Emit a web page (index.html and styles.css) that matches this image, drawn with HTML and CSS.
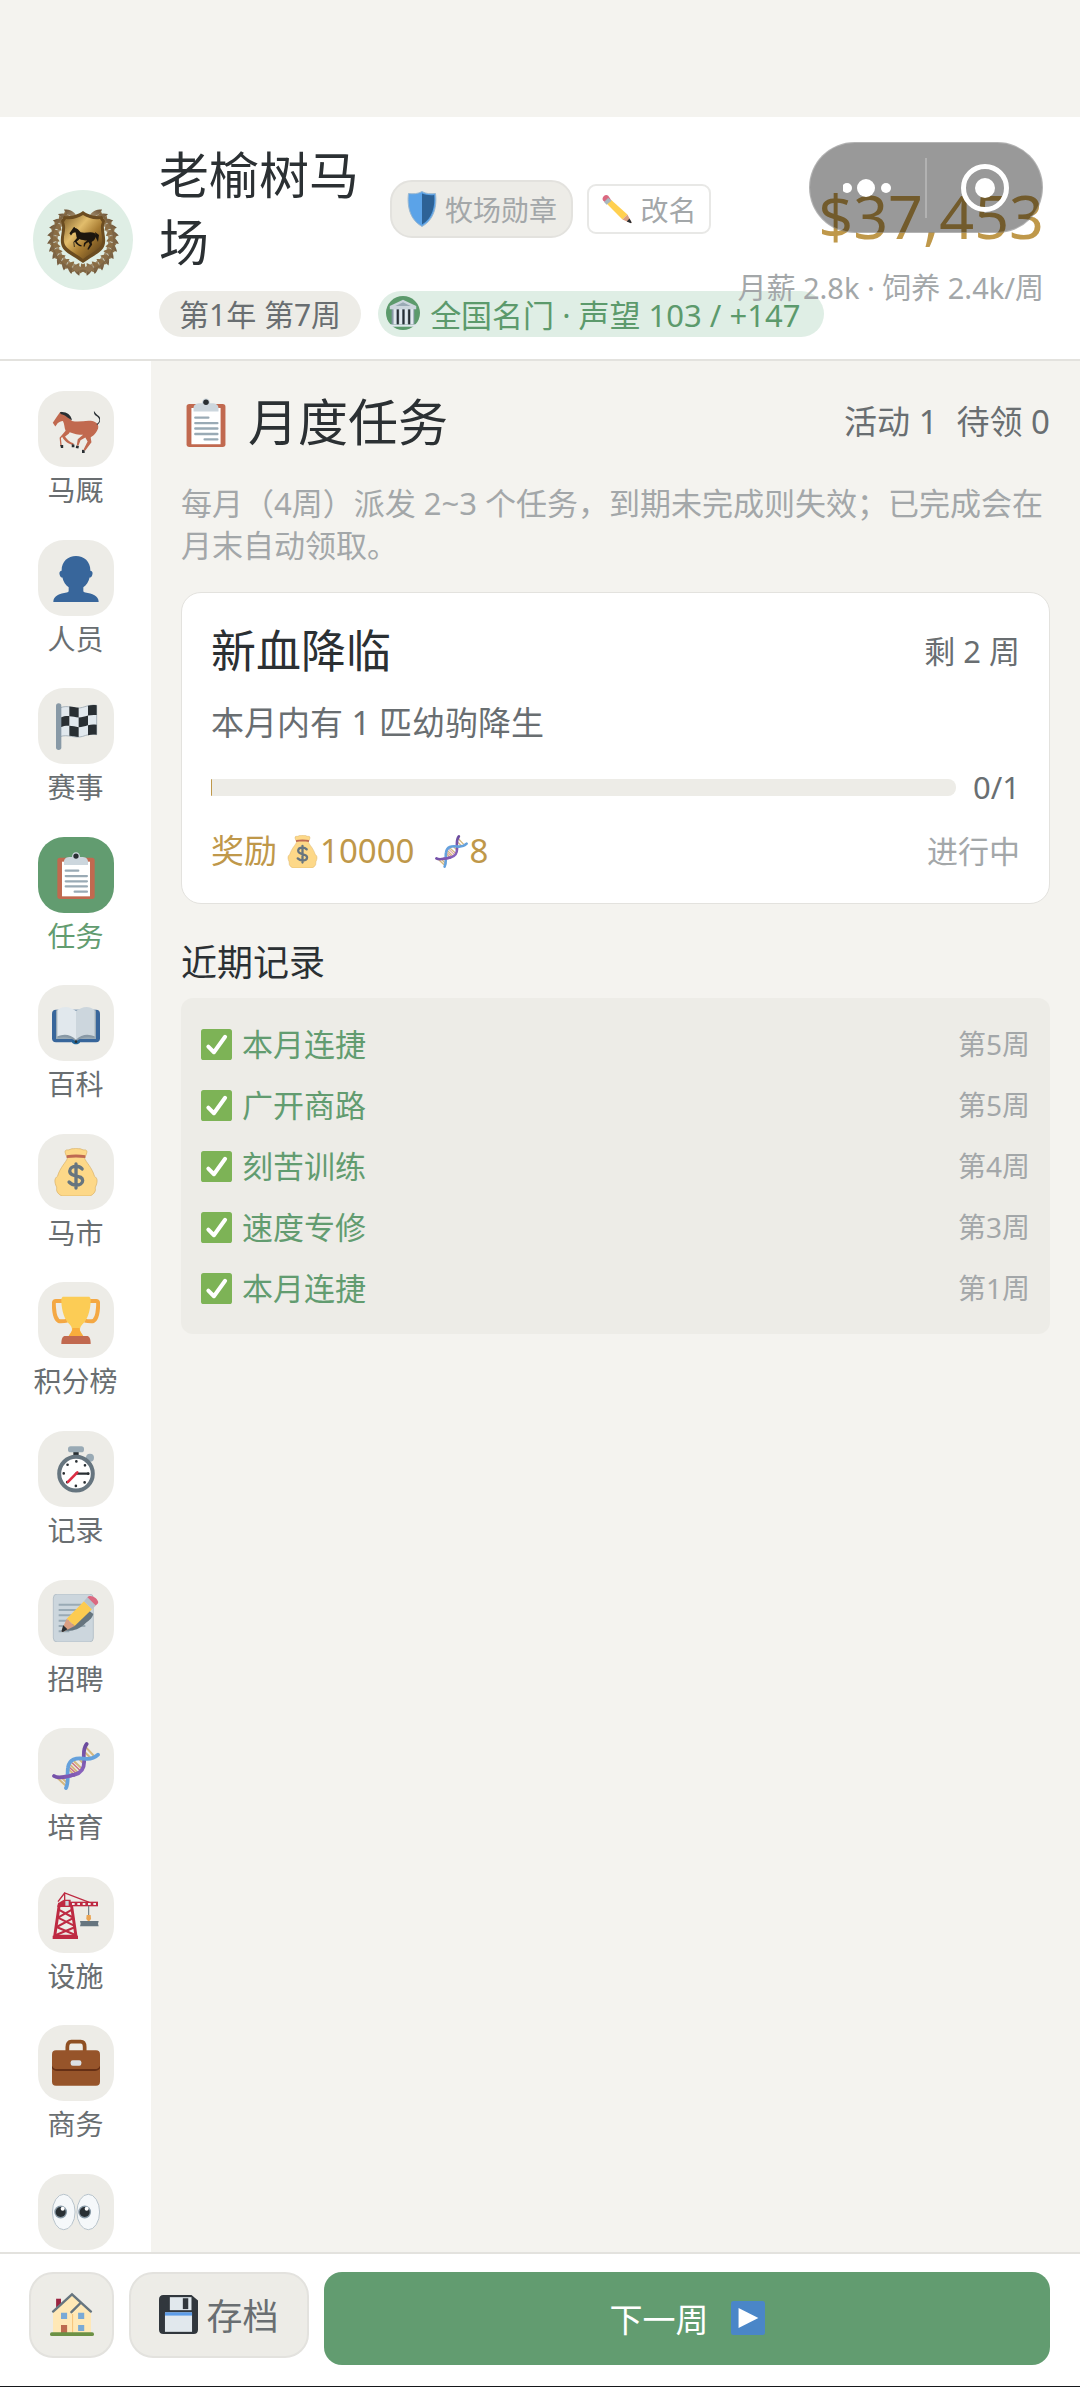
FILE: index.html
```html
<!DOCTYPE html>
<html lang="zh-CN">
<head>
<meta charset="utf-8">
<meta name="viewport" content="width=device-width, initial-scale=1">
<title>月度任务</title>
<link rel="stylesheet" href="styles.css">
</head>
<body>
<svg class="sprite" aria-hidden="true">
  <defs>
    <linearGradient id="gold" x1="0" y1="0" x2="1" y2="1">
      <stop offset="0" stop-color="#7d5d2a"/><stop offset=".35" stop-color="#e2bd6c"/><stop offset=".6" stop-color="#a87c32"/><stop offset="1" stop-color="#4d3415"/>
    </linearGradient>
    <linearGradient id="bronze" x1="0" y1="0" x2="0" y2="1">
      <stop offset="0" stop-color="#a48f6f"/><stop offset="1" stop-color="#6b5133"/>
    </linearGradient>
    <linearGradient id="strandA" x1="0" y1="1" x2="1" y2="0">
      <stop offset="0" stop-color="#7450a8"/><stop offset=".5" stop-color="#8a63bd"/><stop offset="1" stop-color="#6a4a9c"/>
    </linearGradient>
    <g id="leaf"><path d="M50 86c-5-3-8-7-7-12 4 1 8 5 7 12z"/><path d="M50 84c-1-4 0-8 4-11 2 4 1 8-4 11z" fill="#8a6d45"/></g>
    <g id="branch">
      <use href="#leaf" transform="rotate(6 50 50)"/><use href="#leaf" transform="rotate(19 50 50)"/><use href="#leaf" transform="rotate(32 50 50)"/><use href="#leaf" transform="rotate(45 50 50)"/><use href="#leaf" transform="rotate(58 50 50)"/><use href="#leaf" transform="rotate(71 50 50)"/><use href="#leaf" transform="rotate(84 50 50)"/><use href="#leaf" transform="rotate(97 50 50)"/><use href="#leaf" transform="rotate(110 50 50)"/><use href="#leaf" transform="rotate(123 50 50)"/><use href="#leaf" transform="rotate(136 50 50)"/><use href="#leaf" transform="rotate(148 50 50)"/>
    </g>
    <path id="horse-shape" d="M.6 13.3 4 8.2 6 5.4l1.200-.4.5 1.300c3 .5 5.300 3 7.300 5.700 4 .8 8 .2 12.500-.2 4 0 7 1.500 7.200 4.200.2 2-1 3.500-2 5-1.200 1.800-2.700 2.500-3.700 3.300l.6 3.700-4.600 6.200-1.500-.5 3.200-6.400-1.700-3-3.600 2.200-1.600 4-1.200-.3.700-4.600 4-3.200c-3.500-.2-7-.7-10-2-.8 1.700-2.700 2.200-3.500 3.300 1.700 2.300 3.500 4.500 6.400 4.900l-.3 1.400c-4-.6-6.800-3.200-8.300-6.100l-.9 1 .6 5.800H6.300l-.6-6.200 4.500-5.200c-1-2-.7-5-2-7.300-1.500.3-3 .7-4 1.700l-1.700 2.400z"/>

    <symbol id="i-horse" viewBox="0 0 36 36">
      <use href="#horse-shape" fill="#c1694f"/>
      <path d="M6 5.500c4-.9 8 1.500 9 5.700-3-1-5-4-8.500-4.500z" fill="#292f33"/>
      <path d="M33.500 14c2.500-1 3-4-.5-6-1.500-1-1.700-2.500-1.500-3.500 1.500 3 5 3.500 4.700 6.500-.1 2-1.200 3.500-2.500 4z" fill="#292f33"/>
      <path d="M6.200 30h2.200v2.200H6.700zM14.800 29.500l2 .2v2h-2zM18.200 30.300l2 .4-.4 2-2-.4zM22.500 33.500l2 .5v2h-2z" fill="#292f33"/>
    </symbol>
    <symbol id="i-person" viewBox="0 0 36 36">
      <path d="M18 1.500c6 0 10.800 4 10.800 11 1.700.2 1.900 1.600 1.400 3.200-.4 1.400-1.200 2-2 2-.7 3.300-2.400 5.700-4.700 7.300v2.500c0 .8.600 1.200 1.500 1.400C30 29.500 35 31.500 35 36H1c0-4.500 5-6.500 10-7.100.9-.2 1.500-.6 1.500-1.400V25c-2.300-1.600-4-4-4.700-7.300-.8 0-1.600-.6-2-2-.5-1.600-.3-3 1.400-3.200 0-7 4.800-11 10.800-11z" fill="#38669b"/>
    </symbol>
    <symbol id="i-flag" viewBox="0 0 36 36">
      <path d="M6 4.500C12 1.500 17 6 23 4c4-1.300 7-2 10.500-1.500v22c-4.500-.7-7.500.2-10.500 1.300-6 1.800-11-2-17 .2z" fill="#e1e8ed" stroke="#99a6b0" stroke-width=".6"/>
      <path d="M13 3.300c2.500.2 4.500.7 7 1v7.300c-2.500-.3-4.500-.8-7-1zM27 2.900c2-.6 4-.7 6.500-.4v7.300c-2.500-.3-4.500-.1-6.500.4zM6 11.800c2.500-1 4.500-1.300 7-1.200v7.300c-2.500-.1-4.500.2-7 1.200zM20 11.600c2.500 0 4.500-.7 7-1.400v7.300c-2.500.7-4.500 1.400-7 1.400zM13 17.900c2.500.2 4.500.7 7 1v7.400c-2.500-.3-4.500-1-7-1zM27 17.500c2-.6 4-.7 6.500-.4v7.400c-2.500-.3-4.500-.1-6.500.4z" fill="#292f33"/>
      <rect x="3" y="1" width="4" height="35" rx="2" fill="#8899a6"/>
    </symbol>
    <symbol id="i-clip" viewBox="0 0 36 36">
      <rect x="4" y="5" width="28" height="31" rx="2" fill="#c1694f"/>
      <path d="M7.500 8h21v26h-21z" fill="#fff"/>
      <path d="M22 4.500h-1C21 2.500 19.800 1 18 1s-3 1.500-3 3.500h-1c-3 0-5 1-5 3.500v2.500h18V8c0-2.500-2-3.500-5-3.500z" fill="#ccd6dd"/>
      <circle cx="18" cy="3.800" r="2" fill="#292f33"/>
      <path d="M10.300 14.800h9.400M10.300 18.800h15.900M10.300 22.700h15.900M10.300 26.600h15.900M17 30.500h9.200" stroke="#99aab5" stroke-width="1.700" stroke-linecap="round"/>
    </symbol>
    <symbol id="i-book" viewBox="0 0 36 36">
      <rect y="8" width="36" height="24.500" rx="3" fill="#38669b"/>
      <path d="M15 31h6v1.500s-.5 1.500-3 1.500-3-1.500-3-1.500z" fill="#269"/>
      <path d="M3 8.500h30V30H3z" fill="#99aab5"/>
      <path d="M4 8.500c5-4.500 10-2 14 .5v22c-4-4-9-4-14-2z" fill="#e1e8ed"/>
      <path d="M32 8.500C27 4 22 6.500 18 9v22c4-4 9-4 14-2z" fill="#ccd6dd"/>
      <path d="M4 28c5-2 10-1.500 14 2.500 4-4 9-4.500 14-2.500v1.300c-5-1-10-.8-14 2.500-4-3.300-9-3.500-14-2.500z" fill="#8899a6"/>
      <circle cx="18" cy="32" r="1" fill="#292f33"/>
    </symbol>
    <symbol id="i-bag" viewBox="0 0 36 36">
      <path d="M31.900 21.300c-2-7-6.500-10.500-7.500-13.800 0 0 2.300-4 1.700-5.300C25.400.700 23.500 2 22.300 1S19 1 18 0c-1 1-3 0-4.300 1s-3.100-.3-3.800 1.200c-.6 1.300 1.700 5.300 1.700 5.300-1 3.300-5.500 6.800-7.500 13.800C1.800 22.500 2 25 2.500 26.800c.3 1.700 1.200 2 1 3.700C3 32.500 5 35 7.500 36h21c2.500-1 4.500-3.500 4-5.500-.2-1.700.7-2 1-3.700.5-1.800.7-4.300-1.600-5.500z" fill="#fdd888" stroke="#d8ae62" stroke-width=".5"/>
      <path d="M11 5.500c4.500-.8 9.500-.8 14 0v2c-4.500-.6-9.500-.6-14 0z" fill="#bf6952"/>
      <path d="M22.600 15.700c-1.200-1.300-2.800-2-4.600-2-2.500 0-4.700 1.300-4.700 3.600 0 5.200 9.700 2.300 9.700 7 0 2.200-2.200 3.500-4.800 3.500-2 0-4-.8-5.400-2.300M18 12v18" fill="none" stroke="#67757f" stroke-width="2.500" stroke-linecap="round"/>
    </symbol>
    <symbol id="i-cup" viewBox="0 0 36 36">
      <path d="M8 3.700H2.800C1 3.700 1.300 6 1.500 9c.4 5.500 1.600 10 5 10 3 0 5-.5 5-.5M28 3.700h5.200c1.800 0 1.500 2.300 1.300 5.300-.4 5.500-1.600 10-5 10-3 0-5-.5-5-.5" fill="none" stroke="#f4a844" stroke-width="3"/>
      <path d="M8 .5h20c1 1 1 1.500 1 3-.2 8-2.500 14.500-6.500 18-1.500 1.500-2 4-1 6 .7 1.500 2 2 2 3.500h-11c0-1.500 1.300-2 2-3.500 1-2 .5-4.500-1-6C9.500 18 7.200 11.500 7 3.500c0-1.500 0-2 1-3z" fill="#fccc55"/>
      <path d="M15.300 24h5.400c0 3 2 4 3 6.500H12.300c1-2.500 3-3.500 3-6.500z" fill="#f8ad3c"/>
      <path d="M10 30h16c2 0 3 2 3 6H7c0-4 1-6 3-6z" fill="#c1694f"/>
    </symbol>
    <symbol id="i-watch" viewBox="0 0 36 36">
      <path d="M16 4h4v6h-4z" fill="#292f33"/>
      <rect x="12" y="1" width="12" height="4.500" rx="2" fill="#99aab5"/>
      <circle cx="28.500" cy="9.500" r="3" fill="#99aab5"/>
      <circle cx="18" cy="21.500" r="12.600" fill="#fff" stroke="#66757f" stroke-width="3"/>
      <circle cx="18" cy="21.500" r="9.200" fill="none" stroke="#292f33" stroke-width="2" stroke-linecap="round" stroke-dasharray="0 7.226"/>
      <path d="M18 21.500h9" stroke="#292f33" stroke-width="1.800" stroke-linecap="round"/>
      <path d="m19 20.500-7 7.200" stroke="#dd2e44" stroke-width="2" stroke-linecap="round"/>
    </symbol>
    <symbol id="i-memo" viewBox="0 0 36 36">
      <rect x="1" y="0" width="30" height="36" rx="3" fill="#ccd6dd" stroke="#aebbc4" stroke-width=".6"/>
      <path d="M5 8h17M5 12h14M5 16h11M5 20h8M5 24h20M5 28h8" stroke="#99aab5" stroke-width="1.500"/>
      <path d="m9 27.500 2-1L27 12l4 3c-1 4-4 5-7 8-4 3-7 5-15 4.500z" fill="#66757f"/>
      <path d="m11 18.500 13-13 6 6-13 12.500z" fill="#fccb50"/>
      <path d="m24 5.500 2.500-3 6.500 6.200-3 2.800z" fill="#b5c2cc"/>
      <path d="M26.500 2.500C29-1 37 5 34 7.500l-1.200 1.200z" fill="#db6880"/>
      <path d="m11 18.500 6 5.500-8.500 4.300c-1 .4-1.500-.3-1.200-1.200z" fill="#d99e82"/>
      <path d="m8.400 23.500 3.200 3-3.100 1.800c-1 .4-1.500-.3-1.200-1.200z" fill="#292f33"/>
    </symbol>
    <symbol id="i-dna" viewBox="0 0 36 36">
      <path d="m3.500 26.500 6.500 6M7 26.500l4 4M12.500 20.500l4 4M13.500 17l6.500 6.500M16.500 14.500l6.500 6M20 12.500l4 4M24.500 7.500l4.500 4.500M25 3.500l6.500 7" stroke="#d5b77d" stroke-width="1.500"/>
      <path d="m13 19 5.500 5M15 15.500l6.500 6.300" stroke="#cc6f7c" stroke-width="1"/>
      <path d="M1.500 25.500C5 28 12 25.500 17 24.500c6-1.500 7.500-6.500 7-11.500-.5-5 0-9 2-11.500" fill="none" stroke="url(#strandA)" stroke-width="2.800" stroke-linecap="round"/>
      <path d="M10.500 34.500C13 30 11 24 12 19c1-6 6-7.500 12-6.500 4 .5 8-.5 10.500-3" fill="none" stroke="#65a1dc" stroke-width="2.800" stroke-linecap="round"/>
      <path d="M9 26.200c3-.3 5.500-1.200 8-1.700" fill="none" stroke="#8058b3" stroke-width="2.800"/>
    </symbol>
    <symbol id="i-crane" viewBox="0 0 36 36">
      <path d="M5.500 10h9l3.500 24H2z" fill="none" stroke="#be2a42" stroke-width="2.200"/>
      <path d="m5 14 10 5.500M15 14 4.500 20m0 0 12 6m0-6-13 7m0 0 14 6m0-6L3 33" stroke="#be2a42" stroke-width="1.500"/>
      <path d="M.5 33.500h19V36H.500zM9 6.500h5V12H4c0-3 2-4 5-5.500z" fill="#be2a42"/>
      <path d="M9.500 8V1.500L28 8.500M9.500 1.500 4.500 8" fill="none" stroke="#be2a42" stroke-width="1"/>
      <path d="M13 8h21.500v3.500H13z" fill="#be2a42"/>
      <path d="M15 9h2v1.500h-2zm4 0h2v1.500h-2zm4 0h2v1.500h-2zm4 0h2v1.500h-2zm4 0h2v1.500h-2z" fill="#eee"/>
      <path d="M10 7.500h2.500V11H10z" fill="#ccd6dd"/>
      <path d="M27.500 11v8" stroke="#66757f" stroke-width=".8"/>
      <path d="M26 18h3l.3 3-1.800 2-1.800-2z" fill="#eaa454"/>
      <path d="m21 22.500 14 0-.5 2 .5 2H21l.5-2z" fill="#66757f"/>
    </symbol>
    <symbol id="i-case" viewBox="0 0 36 36">
      <path d="M11.500 10V6c0-2.500 1-4 3-4h7c2 0 3 1.500 3 4v4" fill="none" stroke="#8f5023" stroke-width="2.800"/>
      <rect y="8.500" width="36" height="26.500" rx="3" fill="#96542a"/>
      <path d="M0 20c1 2 2 2.500 4 2.500h28c2 0 3-.5 4-2.500v2c-1 1.300-2 2-4 2H4c-2 0-3-.7-4-2z" fill="#652f15"/>
      <rect x="14" y="16" width="8" height="4" rx="1.500" fill="#dbe0e5"/>
    </symbol>
    <symbol id="i-eyes" viewBox="0 0 36 36">
      <ellipse cx="8.800" cy="18" rx="8.500" ry="13.300" fill="#f5f8fa" stroke="#b4bfc8" stroke-width=".7"/>
      <ellipse cx="27.200" cy="18" rx="8.500" ry="13.300" fill="#f5f8fa" stroke="#b4bfc8" stroke-width=".7"/>
      <circle cx="6.500" cy="18" r="4.800" fill="#8899a6"/><circle cx="24.500" cy="18" r="4.800" fill="#8899a6"/>
      <circle cx="6.500" cy="18" r="3.800" fill="#292f33"/><circle cx="24.500" cy="18" r="3.800" fill="#292f33"/>
      <circle cx="8" cy="15.500" r="1.500" fill="#fff"/><circle cx="26" cy="15.500" r="1.500" fill="#fff"/>
    </symbol>
    <symbol id="i-home" viewBox="0 0 36 36">
      <path d="M5 5.500h4V14H5z" fill="#9b2440"/>
      <path d="M2.500 15 18 2l9 9 6.500 6v17h-31z" fill="#ffe8b6"/>
      <path d="M18.500 34V18" stroke="#f4bb6b" stroke-width=".7"/>
      <path d="M2.500 16 18 2l15.500 14M17.500 16.500 25 9" fill="none" stroke="#66757f" stroke-width="2" stroke-linecap="round"/>
      <path d="M9 17h5v5H9zM23 17h5v5h-5zM23 27h5v5h-5z" fill="#7aaad6"/>
      <path d="M9 27h5v7H9z" fill="#bd6b4f"/>
      <rect y="33" width="36" height="3" rx="1.500" fill="#6c9145"/>
    </symbol>
    <symbol id="i-disk" viewBox="0 0 36 36">
      <path d="M4 0h26l6 5v27c0 2.500-1.500 4-4 4H4c-2.500 0-4-1.500-4-4V4c0-2.500 1.500-4 4-4z" fill="#31373d"/>
      <path d="M10 2h20v12H10z" fill="#e1e8ed"/>
      <path d="M22 3h5v10h-5z" fill="#31373d"/>
      <path d="M5.500 16h25v18h-25z" fill="#e1e8ed"/>
      <path d="M5.500 16h25v3h-25z" fill="#5c9ce8"/>
    </symbol>
    <symbol id="i-play" viewBox="0 0 36 36">
      <rect width="36" height="36" rx="2.500" fill="#4a86c8"/>
      <path d="m8 7.500 21 10.500L8 28.500z" fill="#fff"/>
    </symbol>
    <symbol id="i-check" viewBox="0 0 36 36">
      <rect width="36" height="36" rx="3" fill="#7db356"/>
      <path d="m8.500 20.500 6.500 6.500L28 9" fill="none" stroke="#fff" stroke-width="4.600" stroke-linecap="round" stroke-linejoin="round"/>
    </symbol>
    <symbol id="i-shield" viewBox="0 0 30 36">
      <path d="M15 .5c4 2.500 9 2.500 13.500 2 1.500 12-1 26-13.500 33C2.500 28.500 0 14.500 1.500 2.500 6 3 11 3 15 .5z" fill="#5ba3e8" stroke="#9db9d0"/>
      <path d="M15 2.500c4 1.500 8 2 12.200 1.500 1 11-1.700 23.500-12.200 29.500z" fill="#2d6296"/>
    </symbol>
    <symbol id="i-pencil" viewBox="0 0 36 36">
      <path d="m10.500 6.500 20 18-6 6-19-19z" fill="#ffd050"/>
      <path d="M5.500 11.500 1.500 8C-1.500 4.500 4-1 7.500 2l3 4.500z" fill="#db6880"/>
      <path d="m7.500 4.500 4 3.500-6 5-3-3.500z" fill="#a8b6be"/>
      <path d="m30.500 24.500 4.800 9.200c.4 1-.2 1.500-1.100 1.200l-9.700-4.400z" fill="#d99e82"/>
      <path d="m33 29.500 2.300 4.200c.4 1-.2 1.500-1.100 1.200L29.700 33z" fill="#292f33"/>
    </symbol>
    <symbol id="i-bank" viewBox="0 0 36 36">
      <circle cx="18" cy="18" r="18" fill="#5c9a6c"/>
      <path d="M4 30h28v2.500H4z" fill="#e1e8ed"/>
      <path d="M6 12h24v18H6z" fill="#8899a6"/>
      <path d="M8 13h3v17H8zM14 13h3v17h-3zM20 13h3v17h-3zM26 13h3v17h-3z" fill="#e1e8ed"/>
      <path d="M11.500 14h2v16h-2zM17.500 14h2v16h-2zM23.500 14h2v16h-2z" fill="#292f33"/>
      <path d="m18 4 14 6.500V14H4v-3.500z" fill="#ccd6dd"/><path d="m18 6.500 8 4H10z" fill="#9aaab5"/>
    </symbol>
  </defs>
</svg>

<div class="app">
  <div class="status-space"></div>

  <header class="topbar">
    <svg class="avatar" viewBox="0 0 100 100" role="img" aria-label="牧场徽章">
      <circle cx="50" cy="50" r="50" fill="#dfeee5"/>
      <g fill="url(#bronze)"><use href="#branch"/><use href="#branch" transform="matrix(-1 0 0 1 100 0)"/></g>
      <circle cx="50" cy="50" r="31" fill="none" stroke="#7d6443" stroke-width="1.500" stroke-dasharray="160 35" transform="rotate(-57 50 50)"/>
      <path d="M50 21c4 3 11 6 19 5l3 5c-3 8 1 14 0 22-1 9-11 12-22 20-11-8-21-11-22-20-1-8 3-14 0-22l3-5c8 1 15-2 19-5z" fill="#6b4c20"/>
      <path d="M50 25c5 3 11 5 17 4l2 3c-3 7 1 13 0 20-1 7-10 10-19 17-9-7-18-10-19-17-1-7 3-13 0-20l2-3c6 1 12-1 17-4z" fill="url(#gold)"/>
      <use href="#horse-shape" fill="#1d160e" transform="translate(36 33) scale(.78)"/>
      <path d="m62 42 4 3-1 7-2-4z" fill="#1d160e"/>
      <path d="m39 79 5-4 6 3 6-3 5 4-5 3-6-3-6 3z" fill="#8f7450"/>
    </svg>

    <div class="ranch">
      <div class="ranch-row">
        <h1 class="ranch-name">老榆树马场</h1>
        <button class="medal" type="button"><svg class="medal-icon" aria-hidden="true"><use href="#i-shield"/></svg>牧场勋章</button>
        <button class="rename" type="button"><svg class="rename-icon" aria-hidden="true"><use href="#i-pencil"/></svg>改名</button>
      </div>
      <div class="pills">
        <span class="pill">第1年 第7周</span>
        <span class="pill pill-rank"><svg class="rank-icon" aria-hidden="true"><use href="#i-bank"/></svg>全国名门 · 声望 103 / +147</span>
      </div>
    </div>

    <div class="funds">
      <div class="money">$37,453</div>
      <div class="rate">月薪 2.8k · 饲养 2.4k/周</div>
    </div>

    <div class="capsule">
      <button class="capsule-btn" type="button" aria-label="更多">
        <svg width="50" height="50" viewBox="0 0 50 50" aria-hidden="true"><g fill="#fff"><circle cx="4" cy="25" r="5"/><circle cx="23" cy="25" r="9"/><circle cx="43" cy="25" r="5"/></g></svg>
      </button>
      <button class="capsule-btn" type="button" aria-label="关闭">
        <svg width="50" height="50" viewBox="0 0 50 50" aria-hidden="true"><circle cx="25" cy="25" r="21.500" fill="none" stroke="#fff" stroke-width="5"/><circle cx="25" cy="25" r="10" fill="#fff"/></svg>
      </button>
    </div>
  </header>

  <div class="body">
    <nav class="side">
      <a class="side-item" href="#stable"><span class="tile"><svg class="tile-icon" aria-hidden="true"><use href="#i-horse"/></svg></span>马厩</a>
      <a class="side-item" href="#staff"><span class="tile"><svg class="tile-icon" aria-hidden="true"><use href="#i-person"/></svg></span>人员</a>
      <a class="side-item" href="#races"><span class="tile"><svg class="tile-icon" aria-hidden="true"><use href="#i-flag"/></svg></span>赛事</a>
      <a class="side-item is-active" href="#tasks" aria-current="page"><span class="tile"><svg class="tile-icon" aria-hidden="true"><use href="#i-clip"/></svg></span>任务</a>
      <a class="side-item" href="#wiki"><span class="tile"><svg class="tile-icon" aria-hidden="true"><use href="#i-book"/></svg></span>百科</a>
      <a class="side-item" href="#market"><span class="tile"><svg class="tile-icon" aria-hidden="true"><use href="#i-bag"/></svg></span>马市</a>
      <a class="side-item" href="#ranking"><span class="tile"><svg class="tile-icon" aria-hidden="true"><use href="#i-cup"/></svg></span>积分榜</a>
      <a class="side-item" href="#records"><span class="tile"><svg class="tile-icon" aria-hidden="true"><use href="#i-watch"/></svg></span>记录</a>
      <a class="side-item" href="#hiring"><span class="tile"><svg class="tile-icon" aria-hidden="true"><use href="#i-memo"/></svg></span>招聘</a>
      <a class="side-item" href="#breeding"><span class="tile"><svg class="tile-icon" aria-hidden="true"><use href="#i-dna"/></svg></span>培育</a>
      <a class="side-item" href="#facilities"><span class="tile"><svg class="tile-icon" aria-hidden="true"><use href="#i-crane"/></svg></span>设施</a>
      <a class="side-item" href="#business"><span class="tile"><svg class="tile-icon" aria-hidden="true"><use href="#i-case"/></svg></span>商务</a>
      <a class="side-item" href="#watch" aria-label="观察"><span class="tile"><svg class="tile-icon" aria-hidden="true"><use href="#i-eyes"/></svg></span></a>
    </nav>

    <main class="content">
      <div class="page-head">
        <h2 class="page-title"><svg class="title-icon" aria-hidden="true"><use href="#i-clip"/></svg>月度任务</h2>
        <div class="counts"><span>活动 1</span><span>待领 0</span></div>
      </div>
      <p class="intro">每月（4周）派发 2~3 个任务，到期未完成则失效；已完成会在月末自动领取。</p>

      <article class="task">
        <div class="task-line">
          <h3 class="task-name">新血降临</h3>
          <span class="task-left">剩 2 周</span>
        </div>
        <p class="task-desc">本月内有 1 匹幼驹降生</p>
        <div class="task-line task-progress">
          <div class="bar" role="progressbar" aria-label="任务进度" aria-valuemin="0" aria-valuemax="1" aria-valuenow="0"></div>
          <span class="bar-count">0/1</span>
        </div>
        <div class="task-line">
          <div class="reward"><span>奖励</span><span class="prize"><svg class="prize-icon" aria-hidden="true"><use href="#i-bag"/></svg>10000</span><span class="prize prize-dna"><svg class="prize-icon" aria-hidden="true"><use href="#i-dna"/></svg>8</span></div>
          <span class="task-state">进行中</span>
        </div>
      </article>

      <h3 class="history-title">近期记录</h3>
      <ul class="history">
        <li class="history-row"><svg class="check" aria-hidden="true"><use href="#i-check"/></svg>本月连捷<span class="week">第5周</span></li>
        <li class="history-row"><svg class="check" aria-hidden="true"><use href="#i-check"/></svg>广开商路<span class="week">第5周</span></li>
        <li class="history-row"><svg class="check" aria-hidden="true"><use href="#i-check"/></svg>刻苦训练<span class="week">第4周</span></li>
        <li class="history-row"><svg class="check" aria-hidden="true"><use href="#i-check"/></svg>速度专修<span class="week">第3周</span></li>
        <li class="history-row"><svg class="check" aria-hidden="true"><use href="#i-check"/></svg>本月连捷<span class="week">第1周</span></li>
      </ul>
    </main>
  </div>

  <footer class="actions">
    <button class="soft-btn home-btn" type="button" aria-label="主页"><svg class="home-icon" aria-hidden="true"><use href="#i-home"/></svg></button>
    <button class="soft-btn save-btn" type="button"><svg class="disk-icon" aria-hidden="true"><use href="#i-disk"/></svg>存档</button>
    <button class="next-btn" type="button">下一周<svg class="play-icon" aria-hidden="true"><use href="#i-play"/></svg></button>
  </footer>
</div>
</body>
</html>
```
FILE: styles.css
```css
:root {
  --bg: #f4f3ef;
  --soft: #edece7;
  --line: #e3e2de;
  --ink: #2b3033;
  --text: #696e71;
  --muted: #a3a7a9;
  --green: #629c70;
  --gold: #bf984a;
}

* { box-sizing: border-box; }

body {
  margin: 0;
  background: var(--bg);
  color: var(--text);
  font-family: "Noto Sans", "Noto Sans CJK SC", sans-serif;
  font-size: 31px;
}

h1, h2, h3, p, ul { margin: 0; padding: 0; font-weight: 400; }
button { margin: 0; padding: 0; font-family: inherit; cursor: pointer; }
svg { flex: none; }
.sprite { position: absolute; width: 0; height: 0; }

.app { display: flex; flex-direction: column; min-height: 100vh; }
.status-space { height: 117px; }

/* Header */
.topbar {
  position: relative;
  display: flex;
  align-items: center;
  gap: 26px;
  padding: 25px 36px 22px 33px;
  background: #fff;
  border-bottom: 2px solid var(--line);
}
.avatar { width: 100px; height: 100px; }
.ranch { flex: 1; min-width: 0; }
.ranch-row { display: flex; align-items: center; gap: 14px; }
.ranch-name { flex: 1; min-width: 0; color: var(--ink); font-size: 50px; line-height: 67px; }
.medal, .rename {
  display: flex;
  align-items: center;
  justify-content: center;
  flex: none;
  color: var(--muted);
  font-size: 28px;
  white-space: nowrap;
}
.medal { gap: 8px; width: 183px; height: 58px; background: var(--soft); border: 2px solid var(--line); border-radius: 22px; }
.rename { gap: 8px; width: 124px; height: 50px; background: #fff; border: 2px solid #e8e8e6; border-radius: 9px; }
.medal-icon { width: 30px; height: 36px; }
.rename-icon { width: 30px; height: 30px; }

.pills { display: flex; gap: 17px; margin-top: 15px; }
.pill {
  display: flex;
  align-items: center;
  flex: none;
  height: 46px;
  padding: 0 20px 2px;
  border-radius: 23px;
  background: var(--soft);
  font-size: 30px;
  white-space: nowrap;
}
.pill-rank { gap: 10px; padding: 0 24px 2px 8px; background: #dfeee5; color: #5c9a6c; font-size: 31px; }
.rank-icon { width: 34px; height: 34px; }

.funds { position: relative; flex: 0 0 302px; padding-top: 8px; text-align: right; white-space: nowrap; }
.money { color: var(--gold); font-size: 61px; line-height: 70px; }
.rate { display: flex; justify-content: flex-end; margin-top: 19px; color: var(--muted); font-size: 29px; line-height: 36px; }

/* Floating system capsule above the header */
.capsule {
  position: absolute;
  top: 25px;
  right: 37px;
  display: flex;
  align-items: center;
  width: 234px;
  height: 91px;
  border: 1px solid rgba(255, 255, 255, .25);
  border-radius: 46px;
  background: rgba(0, 0, 0, .4);
}
.capsule-btn { display: flex; align-items: center; justify-content: center; flex: 1; height: 60px; border: 0; background: none; }
.capsule-btn + .capsule-btn { border-left: 2px solid rgba(255, 255, 255, .25); }

/* Body */
.body { display: flex; flex: 1; }
.side {
  display: flex;
  flex-direction: column;
  justify-content: space-between;
  flex: 0 0 151px;
  padding: 30px 0 2px;
  background: #fff;
}
.side-item {
  display: flex;
  flex-direction: column;
  align-items: center;
  color: var(--text);
  font-size: 28px;
  line-height: 46px;
  text-decoration: none;
}
.tile {
  display: flex;
  align-items: center;
  justify-content: center;
  width: 76px;
  height: 76px;
  border-radius: 26px;
  background: var(--soft);
}
.tile-icon { width: 48px; height: 48px; }
.is-active { color: var(--green); }
.is-active .tile { background: var(--green); }

.content { flex: 1; min-width: 0; padding: 26px 30px; }
.page-head { display: flex; align-items: center; justify-content: space-between; line-height: 70px; }
.page-title { display: flex; align-items: center; gap: 17px; color: var(--ink); font-size: 50px; }
.title-icon { width: 50px; height: 50px; }
.counts { display: flex; gap: 19px; font-size: 33px; }
.intro { margin-top: 25px; color: var(--muted); font-size: 31px; line-height: 42px; }

.task {
  display: flex;
  flex-direction: column;
  gap: 20px;
  margin-top: 26px;
  padding: 28px 29px 30px;
  border: 1px solid var(--line);
  border-radius: 20px;
  background: #fff;
  line-height: 44px;
}
.task-line { display: flex; align-items: center; justify-content: space-between; }
.task-name { color: var(--ink); font-size: 45px; line-height: 60px; }
.task-left, .bar-count { font-size: 31px; }
.task-desc { font-size: 33px; }
.task-progress { gap: 17px; }
.bar { flex: 1; height: 17px; border-left: 1px solid var(--gold); border-radius: 1px 8px 8px 1px; background: var(--soft); }
.reward { display: flex; align-items: center; gap: 9px; color: var(--gold); font-size: 33px; }
.prize { display: flex; align-items: center; gap: 1px; }
.prize-dna { margin-left: 12px; }
.prize-icon { width: 33px; height: 33px; }
.task-state { color: var(--muted); font-size: 31px; }

.history-title { margin-top: 34px; color: var(--ink); font-size: 36px; line-height: 50px; }
.history { margin-top: 10px; padding: 16px 20px 15px; border-radius: 12px; background: var(--soft); list-style: none; }
.history-row { display: flex; align-items: center; gap: 10px; color: var(--green); font-size: 31px; line-height: 61px; }
.check { width: 31px; height: 31px; }
.week { margin-left: auto; color: var(--muted); font-size: 28px; }

/* Bottom actions */
.actions {
  display: flex;
  align-items: flex-start;
  gap: 15px;
  padding: 18px 30px 21px 29px;
  border-top: 2px solid var(--line);
  border-bottom: 1px solid #16181c;
  background: #fff;
}
.soft-btn {
  display: flex;
  align-items: center;
  justify-content: center;
  flex: none;
  gap: 8px;
  height: 86px;
  padding-bottom: 2px;
  border: 2px solid var(--line);
  border-radius: 24px;
  background: var(--soft);
  color: var(--text);
  font-size: 36px;
}
.home-btn { width: 85px; }
.save-btn { width: 180px; }
.home-icon { width: 44px; height: 48px; }
.disk-icon { width: 39px; height: 39px; }
.next-btn {
  display: flex;
  align-items: center;
  justify-content: center;
  flex: 1;
  gap: 22px;
  height: 93px;
  padding-bottom: 2px;
  border: 0;
  border-radius: 18px;
  background: var(--green);
  color: #fff;
  font-size: 33px;
}
.play-icon { width: 34px; height: 34px; }
```
